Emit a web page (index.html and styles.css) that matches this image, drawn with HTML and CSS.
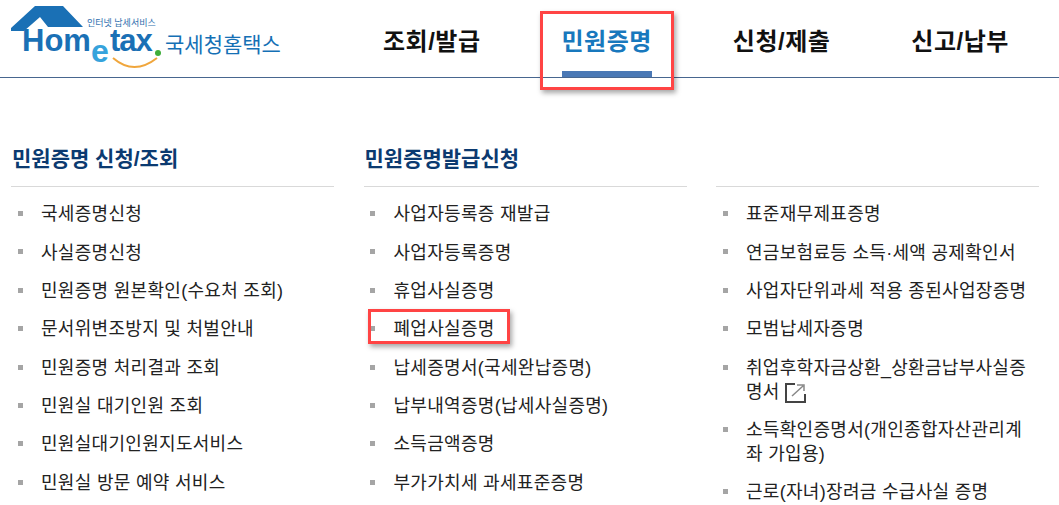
FILE: index.html
```html
<!DOCTYPE html>
<html lang="ko">
<head>
  <meta charset="UTF-8" />
  <title>국세청홈택스 민원증명</title>
  <link rel="stylesheet" href="styles.css">
</head>
<body>
  <header class="top">
    <div class="logo">
      <svg class="logo-mark" width="170" height="72" viewBox="0 0 170 72">
        <path d="M35 6 L63 6 L83 27 L48 27 L40 17 L24 31 L11 31 L11 28 Z" fill="#1a70b5" />
        <text x="87" y="25.5" class="logo-small">인터넷 납세서비스</text>
        <text x="22" y="51" class="logo-big">Hom</text>
        <text x="91" y="62" class="logo-e">e</text>
        <text x="110" y="51" class="logo-big logo-tax">tax</text>
        <circle cx="158" cy="53" r="3" fill="#3fae3a" />
        <path d="M113 58 Q134 76 157 58" fill="none" stroke="#f0a63c" stroke-width="2" />
      </svg>
      <span class="logo-name">국세청홈택스</span>
    </div>
    <nav class="menu">
      <a class="menu-item">조회/발급</a>
      <a class="menu-item active">민원증명</a>
      <a class="menu-item">신청/제출</a>
      <a class="menu-item">신고/납부</a>
    </nav>
  </header>

  <main class="cols">
    <section class="col">
      <h2>민원증명 신청/조회</h2>
      <ul>
        <li>국세증명신청</li>
        <li>사실증명신청</li>
        <li>민원증명 원본확인(수요처 조회)</li>
        <li>문서위변조방지 및 처벌안내</li>
        <li>민원증명 처리결과 조회</li>
        <li>민원실 대기인원 조회</li>
        <li>민원실대기인원지도서비스</li>
        <li>민원실 방문 예약 서비스</li>
      </ul>
    </section>
    <section class="col">
      <h2>민원증명발급신청</h2>
      <ul>
        <li>사업자등록증 재발급</li>
        <li>사업자등록증명</li>
        <li>휴업사실증명</li>
        <li class="marked">폐업사실증명</li>
        <li>납세증명서(국세완납증명)</li>
        <li>납부내역증명(납세사실증명)</li>
        <li>소득금액증명</li>
        <li>부가가치세 과세표준증명</li>
      </ul>
    </section>
    <section class="col">
      <h2 class="blank">&nbsp;</h2>
      <ul>
        <li>표준재무제표증명</li>
        <li>연금보험료등 소득·세액 공제확인서</li>
        <li>사업자단위과세 적용 종된사업장증명</li>
        <li>모범납세자증명</li>
        <li>취업후학자금상환_상환금납부사실증명서
          <svg class="ext" width="21" height="20" viewBox="0 0 21 20">
            <path d="M10 1 H1 V19 H20 V11" fill="none" stroke="#444" stroke-width="2" />
            <path d="M7 13 L18 3 M12 2 H19 V8" fill="none" stroke="#888" stroke-width="1.5" />
          </svg>
        </li>
        <li>소득확인증명서(개인종합자산관리계좌 가입용)</li>
        <li>근로(자녀)장려금 수급사실 증명</li>
      </ul>
    </section>
  </main>
</body>
</html>
```

FILE: styles.css
```css
body {
  margin: 0;
  font-family: "Liberation Sans", "Noto Sans CJK KR", sans-serif;
  color: #222;
  background: #fff;
  overflow: hidden;
}
.top {
  display: flex;
  height: 77px;
  border-bottom: 1px solid #47668f;
}
.logo {
  width: 345px;
  display: flex;
  align-items: flex-start;
}
.logo-mark {
  flex: none;
}
.logo-small {
  font-size: 9px;
  fill: #2f6fae;
}
.logo-big {
  font-family: "Liberation Sans", sans-serif;
  font-size: 31px;
  font-weight: bold;
  fill: #1a70b5;
}
.logo-tax {
  letter-spacing: -1px;
}
.logo-e {
  font-family: "Liberation Sans", sans-serif;
  font-size: 32px;
  font-weight: bold;
  fill: #36a3dc;
}
.logo-name {
  margin: 28px 0 0 -5px;
  font-size: 21px;
  color: #1570b5;
  white-space: nowrap;
}
.menu {
  display: flex;
  margin-left: 38px;
  gap: 81px;
}
.menu-item {
  position: relative;
  font-size: 24px;
  font-weight: bold;
  color: #111;
  padding-top: 22px;
  letter-spacing: 0.5px;
  white-space: nowrap;
}
.menu-item.active {
  color: #1878bd;
  border-bottom: 6px solid #4a78b5;
  height: 49px;
}
/* red marker round the current tab */
.menu-item.active::after {
  content: "";
  position: absolute;
  left: -22px;
  right: -22px;
  top: 11px;
  height: 73px;
  border: 3px solid #ff4444;
  box-shadow: 2px 3px 5px rgba(0, 0, 0, 0.35);
}
.cols {
  display: grid;
  grid-template-columns: repeat(3, 323px);
  gap: 29.5px;
  padding: 0 0 0 11px;
}
.col h2 {
  margin: 0;
  padding: 67px 0 14px 1px;
  height: 27px;
  line-height: 27px;
  font-size: 21px;
  font-weight: bold;
  color: #0b3a70;
  border-bottom: 1px solid #d9d9d9;
}
.col ul {
  list-style: none;
  margin: 8px 0 0;
  padding: 0;
}
.col li {
  position: relative;
  padding: 7.2px 5px 7.2px 30px;
  font-size: 18px;
  line-height: 24px;
  letter-spacing: 0.3px;
}
.col li::before {
  content: "";
  position: absolute;
  left: 6.5px;
  top: 16px;
  width: 5px;
  height: 5px;
  background: #a5a5a5;
}
.col li.marked::after {
  content: "";
  position: absolute;
  left: 4.5px;
  top: -1px;
  width: 136px;
  height: 29px;
  border: 3px solid #ff4444;
  box-shadow: 2px 3px 5px rgba(0, 0, 0, 0.35);
}
.ext {
  vertical-align: -5px;
}
```
